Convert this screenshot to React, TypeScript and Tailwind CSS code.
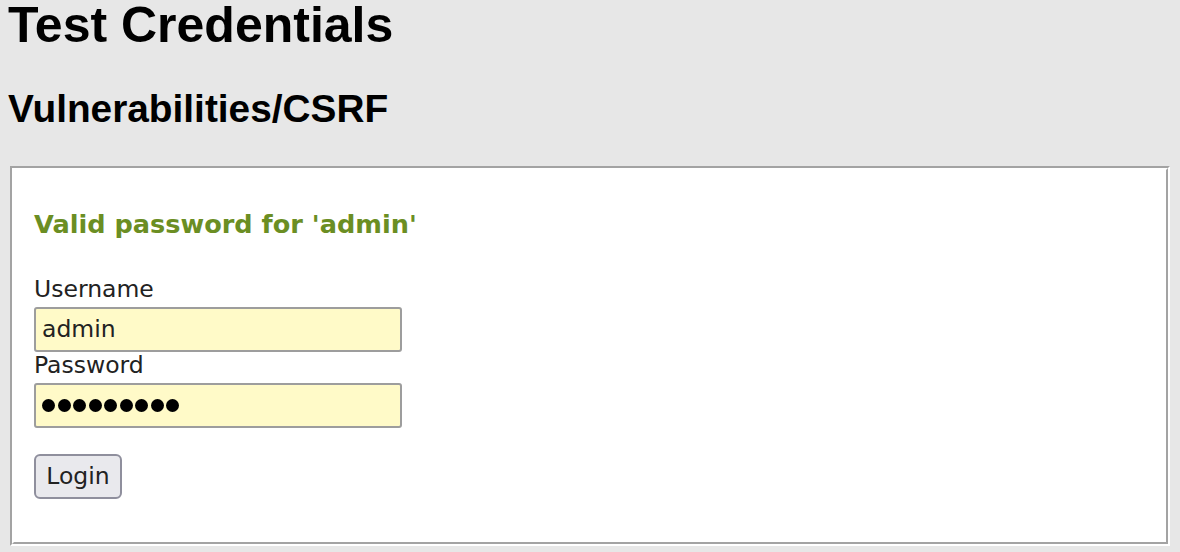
const DOTS = Array.from({ length: 9 });

const Field = ({ label, children }: { label: string; children: React.ReactNode }) => (
  <div>
    <label className="block text-[23.5px] leading-[23.5px] text-[#222]">{label}</label>
    <div className="mt-[5.5px] flex h-[45px] w-[368px] items-center rounded-[3px] border-2 border-[#9d9d9d] bg-[#fffac8] px-[6px]">
      {children}
    </div>
  </div>
);

const App = () => {
  return (
    <div className="min-h-[552px] w-full bg-[#e7e7e7] pl-[8px] font-['Liberation_Sans',Arial,sans-serif] text-black">
      <h1 className="text-[50px] font-bold leading-[50px]">Test Credentials</h1>
      <h2 className="mt-[40px] text-[38.8px] font-bold leading-[38.8px]">Vulnerabilities/CSRF</h2>

      {/* groove border, drawn at 2x */}
      <div className="mt-[37px] ml-[2px] w-[1160px] border-2 border-t-[#a3a3a3] border-l-[#a3a3a3] border-r-white border-b-white">
        <div className="border-2 border-t-white border-l-white border-r-[#a3a3a3] border-b-[#a3a3a3] bg-white pt-[42px] pb-[43px] pl-[20px] font-['DejaVu_Sans',Verdana,sans-serif]">
          <p className="text-[25.6px] font-bold leading-[25.6px] text-[#6b8e23]">Valid password for 'admin'</p>

          <div className="mt-[41px] flex flex-col gap-[2px]">
            <Field label="Username">
              <span className="text-[23.5px] leading-none text-[#222]">admin</span>
            </Field>
            <Field label="Password">
              <div className="flex gap-[2.5px]">
                {DOTS.map((_, i) => (
                  <span key={i} className="size-[13px] rounded-full bg-black" />
                ))}
              </div>
            </Field>
          </div>

          <button className="mt-[26px] h-[45px] w-[88px] rounded-[6px] border-2 border-[#8f8f9d] bg-[#e9e9ed] text-[23.5px] leading-none text-[#222]">
            Login
          </button>
        </div>
      </div>
    </div>
  );
};

export default App;
